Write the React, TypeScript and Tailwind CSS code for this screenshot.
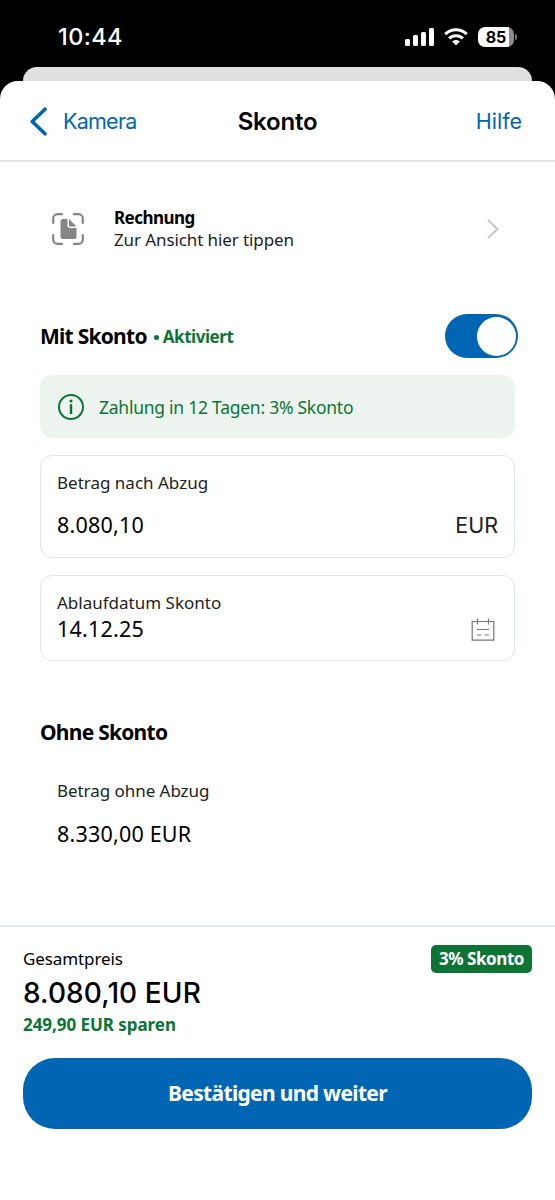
const BARS = ["h-[7px]", "h-[11px]", "h-[14px]", "h-[18px]"];

function StatusBar() {
  return (
    <div className="flex h-[67px] items-start justify-between pl-[58px] pr-[38px] font-['Inter',sans-serif] text-white">
      <span className="mt-[21px] text-[23.5px] leading-8 font-medium tracking-[0.4px]">10:44</span>
      <div className="mt-[27px] flex items-center">
        <div className="flex h-[18px] items-end gap-[3px]">
          {BARS.map((h) => (
            <span key={h} className={"w-[5px] rounded-[1.5px] bg-white " + h} />
          ))}
        </div>
        <svg className="ml-[10px] h-[18px] w-6" viewBox="0 0 24 18" fill="none" stroke="#fff" strokeWidth="3">
          <path d="M1.2 6.2C7.3.3 16.7.3 22.8 6.2" />
          <path d="M5.1 10.4C9 6.7 15 6.7 18.9 10.4" />
          <path d="M12 17.5 8.2 13.6C10.3 11.6 13.7 11.6 15.8 13.6Z" fill="#fff" stroke="none" />
        </svg>
        <div className="ml-[10px] flex h-5 w-9 items-center justify-center overflow-hidden rounded-[7px] bg-[linear-gradient(90deg,#fff_85%,#8b8b8b_85%)] text-[16px] font-bold text-black">
          85
        </div>
        <span className="ml-px h-[6px] w-[2px] rounded-r-full bg-[#777]" />
      </div>
    </div>
  );
}

function Header() {
  return (
    <header className="flex h-[81px] items-center border-b-2 border-[#e4e4e4] px-[30px] pt-px font-['Inter',sans-serif] text-[#0066b3]">
      <button className="flex flex-1 items-center gap-4">
        <svg className="h-[29px] w-[17px]" viewBox="0 0 17 29" fill="none" stroke="currentColor" strokeWidth="3.6" strokeLinecap="round" strokeLinejoin="round">
          <path d="M15 2.2 2.2 14.5 15 26.8" />
        </svg>
        <span className="text-[21.5px] tracking-[-0.75px]">Kamera</span>
      </button>
      <h1 className="ml-[3px] pt-px text-[24px] font-semibold tracking-[-0.2px] text-black">Skonto</h1>
      <button className="flex-1 pr-[3px] text-right text-[21.5px]">Hilfe</button>
    </header>
  );
}

function DocumentRow() {
  return (
    <button className="mt-[45px] ml-3 flex h-11 w-[447px] items-center text-left">
      <svg className="h-8 w-8 shrink-0" viewBox="0 0 32 32" fill="none">
        <path
          d="M10 1.2H5.5A4.3 4.3 0 0 0 1.2 5.5V10M22 1.2H26.5A4.3 4.3 0 0 1 30.8 5.5V10M10 30.8H5.5A4.3 4.3 0 0 1 1.2 26.5V22M22 30.8H26.5A4.3 4.3 0 0 0 30.8 26.5V22"
          stroke="#858585"
          strokeWidth="2.2"
          strokeLinecap="round"
        />
        <path d="M11 6H15.5V12.5A2.5 2.5 0 0 0 18 15H24.5V23.5A2.5 2.5 0 0 1 22 26H11A2.5 2.5 0 0 1 8.5 23.5V8.5A2.5 2.5 0 0 1 11 6Z" fill="#858585" />
        <path d="M17 6 24.5 13.5H17Z" fill="#858585" />
      </svg>
      <span className="ml-[30px] flex-1 leading-[22px]">
        <span className="block text-[17px] font-bold tracking-[-0.55px] text-black">Rechnung</span>
        <span className="block text-[17px] tracking-[-0.1px]">Zur Ansicht hier tippen</span>
      </span>
      <svg className="h-5 w-3" viewBox="0 0 12 20" fill="none" stroke="#c8c8c8" strokeWidth="2.2">
        <path d="M1 1 10.5 10 1 19" />
      </svg>
    </button>
  );
}

function Toggle() {
  return (
    <span className="mr-[-3px] flex h-11 w-[73px] items-center justify-end rounded-full bg-[#0066b3] pr-[2px]">
      <span className="h-[39px] w-[39px] rounded-full bg-white" />
    </span>
  );
}

function CalendarIcon() {
  return (
    <svg className="h-[23px] w-6" viewBox="0 0 24 23" fill="none" stroke="#777" strokeWidth="1.2">
      <path d="M1.2 3.5H22.8V22.2H1.2ZM6.5 .5V6.5M17.5 .5V6.5M6 11.5H18M6 17H10.5M13.5 17H18" />
    </svg>
  );
}

export default function App() {
  return (
    <div className="flex h-[1200px] w-[555px] flex-col bg-black font-['Noto_Sans',sans-serif] text-[#222]">
      <StatusBar />
      <div className="mx-[23px] h-[14px] rounded-t-[14px] bg-[#e0e0e0]" />
      <div className="flex flex-1 flex-col rounded-t-[18px] bg-white">
        <Header />
        <main className="flex h-[763px] flex-col px-10">
          <DocumentRow />
          <div className="mt-[63px] flex h-11 items-center justify-between">
            <h2 className="flex items-center pt-[2px] text-[21px] font-bold tracking-[-0.75px] text-black">
              Mit Skonto
              <span className="ml-[7px] h-[5px] w-[5px] rounded-full bg-[#0d7436]" />
              <span className="ml-1 text-[17px] tracking-[-0.45px] text-[#0d7436]">Aktiviert</span>
            </h2>
            <Toggle />
          </div>
          <div className="mt-[17px] flex h-[63px] items-center rounded-xl bg-[#edf4f0] pl-[18px] text-[#0d7436]">
            <svg className="h-[26px] w-[26px]" viewBox="0 0 26 26" fill="none" stroke="currentColor" strokeWidth="2">
              <circle cx="13" cy="13" r="12" />
              <path d="M13 10.2V20" strokeWidth="2.4" />
              <circle cx="13" cy="7" r="1.6" fill="currentColor" stroke="none" />
            </svg>
            <span className="ml-[15px] pt-px text-[17.5px] tracking-[-0.25px]">Zahlung in 12 Tagen: 3% Skonto</span>
          </div>
          <div className="mt-[17px] h-[103px] rounded-xl border-[1.5px] border-[#e0e6e6] px-4 pt-[15px]">
            <div className="text-[17px] leading-6">Betrag nach Abzug</div>
            <div className="mt-[15px] flex items-center justify-between leading-[30px]">
              <span className="text-[21.5px] tracking-[0.2px] text-black">8.080,10</span>
              <span className="font-['Inter',sans-serif] text-[21.5px]">EUR</span>
            </div>
          </div>
          <div className="mt-[17px] flex h-[86px] justify-between rounded-xl border-[1.5px] border-[#e0e6e6] px-4 pt-[15px]">
            <div>
              <div className="text-[17px] leading-6">Ablaufdatum Skonto</div>
              <div className="pt-px text-[21.5px] leading-[26px] tracking-[0.2px] text-black">14.12.25</div>
            </div>
            <div className="mt-[27px] mr-[3px]">
              <CalendarIcon />
            </div>
          </div>
          <h2 className="mt-[55px] text-[21px] leading-8 font-bold tracking-[-0.75px] text-black">Ohne Skonto</h2>
          <div className="mt-[31px] ml-[17px] text-[17px] leading-6 tracking-[-0.05px]">Betrag ohne Abzug</div>
          <div className="mt-4 ml-[17px] text-[21.5px] leading-[30px] tracking-[0.2px] text-black">8.330,00 EUR</div>
        </main>
        <footer className="border-t-2 border-[#e5eae8] px-[23px] text-black">
          <div className="flex items-start justify-between pt-[18px]">
            <div>
              <div className="mt-[2px] text-[17px] leading-6 tracking-[-0.1px]">Gesamtpreis</div>
              <div className="mt-px font-['Inter',sans-serif] text-[28px] leading-[43px] font-medium tracking-[0.1px]">8.080,10 EUR</div>
              <div className="text-[17px] leading-5 font-bold tracking-[-0.05px] text-[#0d7436]">249,90 EUR sparen</div>
            </div>
            <span className="flex h-7 w-[101px] items-center justify-center rounded-[5px] bg-[#0d7436] text-[17px] font-bold tracking-[-0.45px] text-white">3% Skonto</span>
          </div>
          <button className="mt-[23px] flex h-[71px] w-full items-center justify-center rounded-[32px] bg-[#0066b3] text-[21px] font-bold tracking-[-0.67px] text-white">
            Bestätigen und weiter
          </button>
        </footer>
      </div>
    </div>
  );
}
